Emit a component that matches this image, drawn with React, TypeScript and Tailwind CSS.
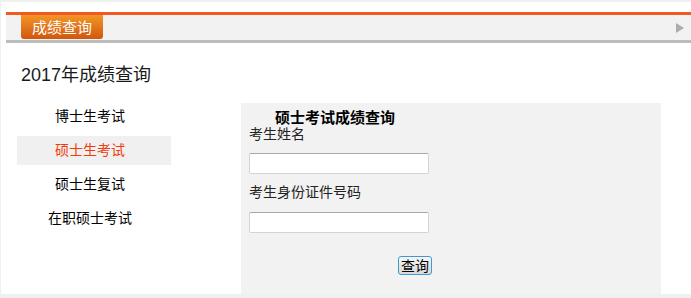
const MENU_ITEMS = ["博士生考试", "硕士生考试", "硕士生复试", "在职硕士考试"];
const ACTIVE_INDEX = 1;

const FONT = "font-['Liberation_Sans','Noto_Sans_CJK_SC',sans-serif]";

export default function App() {
	return (
		<div className={`h-[298px] w-[691px] bg-[#f0f0f0] pt-[2px] pl-[1px] ${FONT}`}>
			<div className="h-[292px] bg-white pl-[5px] pt-[10px]">
				{/* Title bar */}
				<div className="h-[3px] bg-[#f05a22]" />
				<div className="flex h-[28px] items-start justify-between border-b-[3px] border-[#bcbcbc] bg-[#f2f2f2]">
					<div className="ml-[15px] flex h-[24px] w-[82px] items-center justify-center rounded-b-[3px] bg-gradient-to-b from-[#f39526] to-[#d0560f] text-[15px] leading-none text-white">
						成绩查询
					</div>
					<svg className="mt-[8px] mr-[7px]" width="8" height="10" viewBox="0 0 8 10">
						<path d="M0 0 L8 5 L0 10 Z" fill="#acacac" />
					</svg>
				</div>

				<h1 className="mt-[21px] ml-[15px] text-[18px] leading-[22px] text-[#1a1a1a]">2017年成绩查询</h1>

				<div className="mt-[16px] flex">
					{/* Left menu */}
					<ul className="ml-[11px] w-[154px]">
						{MENU_ITEMS.map((item, i) => (
							<li
								key={item}
								className={
									i === ACTIVE_INDEX
										? "mb-[5px] flex h-[29px] items-center justify-center bg-[#f0f0f0] pr-[8px] text-[14px] text-[#f03c0a]"
										: "mb-[5px] flex h-[29px] items-center justify-center pr-[8px] text-[14px] text-black"
								}
							>
								{item}
							</li>
						))}
					</ul>

					{/* Query panel */}
					<div className="ml-[70px] mt-[1px] h-[191px] w-[420px] bg-[#f2f2f2] pt-[7px] pl-[8px]">
						<h2 className="ml-[26px] text-[15px] font-bold leading-[16px] text-black">硕士考试成绩查询</h2>
						<label className="block text-[14px] leading-[16px] text-[#222]">考生姓名</label>
						<input
							type="text"
							className="mt-[11px] block h-[21px] w-[180px] rounded-[2px] border border-[#d4d4d4] border-t-[#a8a8a8] bg-white"
						/>
						<label className="mt-[10px] block text-[14px] leading-[16px] text-[#222]">考生身份证件号码</label>
						<input
							type="text"
							className="mt-[12px] block h-[21px] w-[180px] rounded-[2px] border border-[#d4d4d4] border-t-[#a8a8a8] bg-white"
						/>
						<button
							type="button"
							className="mt-[23px] ml-[149px] flex h-[19px] w-[34px] items-center justify-center rounded-[3px] border border-[#3d9ad6] bg-gradient-to-b from-[#f7f7f7] to-[#d9d9d9] text-[14px] leading-none text-black"
						>
							查询
						</button>
					</div>
				</div>
			</div>
		</div>
	);
}
